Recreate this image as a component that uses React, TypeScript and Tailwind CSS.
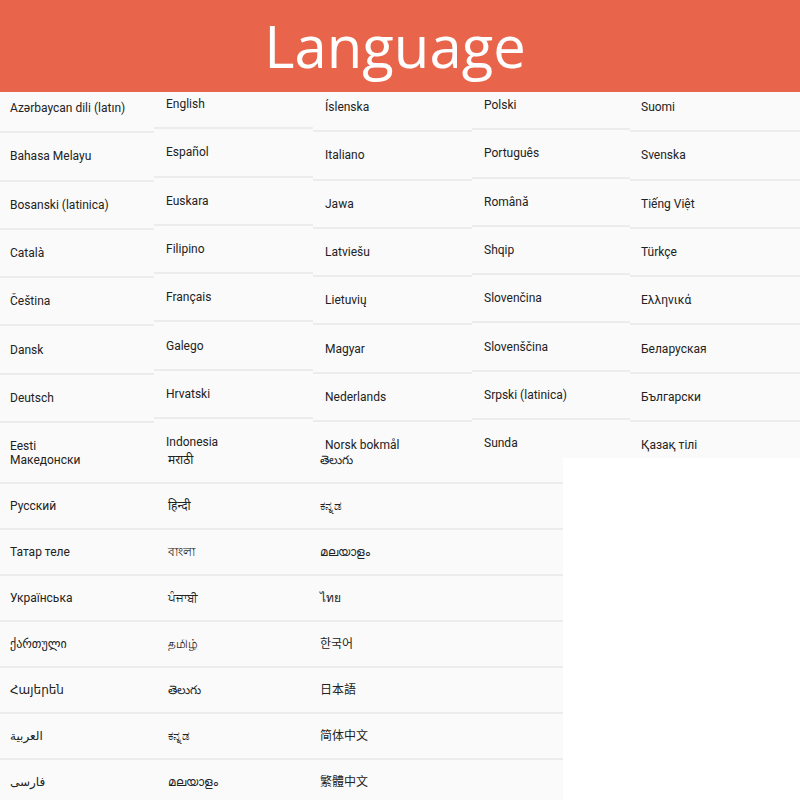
import React from "react";

// Top part of the list: five columns, each slightly shifted vertically
const topColumns = [
  {
    width: "w-[154px]",
    shift: "-mt-[7px]",
    pad: "pl-[10px]",
    items: ["Azərbaycan dili (latın)", "Bahasa Melayu", "Bosanski (latinica)", "Català", "Čeština", "Dansk", "Deutsch", "Eesti"],
  },
  {
    width: "w-[159px]",
    shift: "-mt-[11px]",
    pad: "pl-[12px]",
    items: ["English", "Español", "Euskara", "Filipino", "Français", "Galego", "Hrvatski", "Indonesia"],
  },
  {
    width: "w-[159px]",
    shift: "-mt-[8px]",
    pad: "pl-[12px]",
    items: ["Íslenska", "Italiano", "Jawa", "Latviešu", "Lietuvių", "Magyar", "Nederlands", "Norsk bokmål"],
  },
  {
    width: "w-[158px]",
    shift: "-mt-[10px]",
    pad: "pl-[12px]",
    items: ["Polski", "Português", "Română", "Shqip", "Slovenčina", "Slovenščina", "Srpski (latinica)", "Sunda"],
  },
  {
    width: "flex-1",
    shift: "-mt-[8px]",
    pad: "pl-[11px]",
    items: ["Suomi", "Svenska", "Tiếng Việt", "Türkçe", "Ελληνικά", "Беларуская", "Български", "Қазақ тілі"],
  },
];

// Lower part: three columns, first row cut by the top part
const bottomColumns = [
  {
    width: "w-[155px]",
    pad: "pl-[10px]",
    items: ["Македонски", "Русский", "Татар теле", "Українська", "ქართული", "Հայերեն", "العربية", "فارسی"],
  },
  {
    width: "w-[155px]",
    pad: "pl-[13px]",
    items: ["मराठी", "हिन्दी", "বাংলা", "ਪੰਜਾਬੀ", "தமிழ்", "తెలుగు", "ಕನ್ನಡ", "മലയാളം"],
  },
  {
    width: "w-[253px]",
    pad: "pl-[10px]",
    items: ["తెలుగు", "ಕನ್ನಡ", "മലയാളം", "ไทย", "한국어", "日本語", "简体中文", "繁體中文"],
  },
];

const font =
  "font-['Roboto','Noto_Sans','DejaVu_Sans','Noto_Sans_CJK_SC',sans-serif]";

export default function App() {
  return (
    <div className={`w-[800px] h-[800px] overflow-hidden bg-white ${font}`}>
      <header className="h-[92px] bg-[#e8644a] flex items-center justify-center">
        <h1 className="text-white text-[58px] leading-none font-['Open_Sans',sans-serif] font-medium -ml-[10px]">
          Language
        </h1>
      </header>

      <section className="h-[360px] overflow-hidden flex bg-[#fafafa]">
        {topColumns.map((col, ci) => (
          <div key={ci} className={`${col.width} ${col.shift} flex flex-col`}>
            {col.items.map((item) => (
              <div
                key={item}
                className={`h-[48.3px] shrink-0 flex items-center ${col.pad} border-b-2 border-[#ececec] text-[12px] text-[#222]`}
              >
                {item}
              </div>
            ))}
          </div>
        ))}
      </section>

      <section className="h-[348px] overflow-hidden flex bg-white">
        {bottomColumns.map((col, ci) => (
          <div key={ci} className={`${col.width} -mt-[14px] flex flex-col bg-[#fafafa]`}>
            {col.items.map((item, i) => (
              <div
                key={item + i}
                className={`h-[46px] shrink-0 flex items-center ${col.pad} border-b-2 border-[#ececec] text-[12px] text-[#222]`}
              >
                {item}
              </div>
            ))}
          </div>
        ))}
        <div className="flex-1 border-t-[6px] border-[#fafafa] bg-white" />
      </section>
    </div>
  );
}
